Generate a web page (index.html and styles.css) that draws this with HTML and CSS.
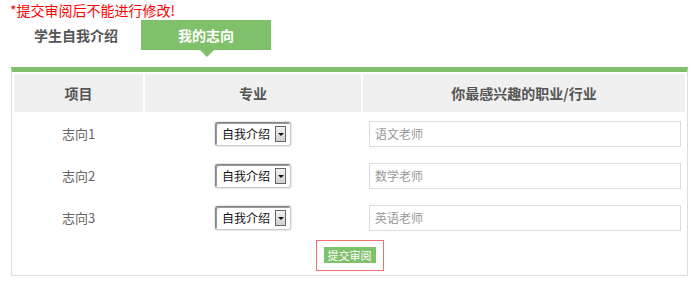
FILE: index.html
```html
<!DOCTYPE html>
<html lang="zh-CN">
<head>
    <meta charset="UTF-8">
    <meta name="viewport" content="width=device-width, initial-scale=1.0">
    <title>我的志向</title>
    <link rel="stylesheet" href="styles.css">
</head>
<body>
    <div id="page">
        <p class="notice">*提交审阅后不能进行修改!</p>
        <ul class="tabs">
            <li class="tab">学生自我介绍</li>
            <li class="tab active">我的志向</li>
        </ul>
        <div class="panel">
            <table class="goals">
                <thead>
                    <tr>
                        <th class="col-item">项目</th>
                        <th class="col-major">专业</th>
                        <th>你最感兴趣的职业/行业</th>
                    </tr>
                </thead>
                <tbody>
                    <tr>
                        <td>志向1</td>
                        <td>
                            <span class="picker">
                                <select class="picker-select"><option>自我介绍</option></select>
                                <span class="picker-arrow"></span>
                            </span>
                        </td>
                        <td class="cell-job"><input type="text" placeholder="语文老师"></td>
                    </tr>
                    <tr>
                        <td>志向2</td>
                        <td>
                            <span class="picker">
                                <select class="picker-select"><option>自我介绍</option></select>
                                <span class="picker-arrow"></span>
                            </span>
                        </td>
                        <td class="cell-job"><input type="text" placeholder="数学老师"></td>
                    </tr>
                    <tr>
                        <td>志向3</td>
                        <td>
                            <span class="picker">
                                <select class="picker-select"><option>自我介绍</option></select>
                                <span class="picker-arrow"></span>
                            </span>
                        </td>
                        <td class="cell-job"><input type="text" placeholder="英语老师"></td>
                    </tr>
                </tbody>
            </table>
            <div class="actions">
                <span class="submit-wrap"><button class="submit">提交审阅</button></span>
            </div>
        </div>
    </div>
</body>
</html>
```

FILE: styles.css
```css
body {
    margin: 0;
    background: #fff;
    font-family: "Noto Sans CJK SC", "Noto Sans", sans-serif;
    color: #555;
}
#page {
    width: 693px;
}
.notice {
    margin: 0;
    padding: 1px 0 0 10px;
    height: 19px;
    font-size: 14px;
    line-height: 18px;
    color: #f00;
}
.tabs {
    display: flex;
    margin: 0 0 17px 11px;
    padding: 0;
    list-style: none;
    height: 30px;
}
.tab {
    position: relative;
    width: 130px;
    height: 30px;
    line-height: 30px;
    text-align: center;
    font-size: 14px;
    font-weight: bold;
    color: #555;
}
.tab.active {
    background: #7fc06a;
    color: #fff;
}
.tab.active::after {
    content: "";
    position: absolute;
    left: 50%;
    top: 100%;
    margin-left: -6px;
    border-left: 7px solid transparent;
    border-right: 7px solid transparent;
    border-top: 7px solid #7fc06a;
}
.panel {
    box-sizing: border-box;
    width: 677px;
    margin-left: 11px;
    border: 1px solid #ddd;
    border-top: 5px solid #7fc06a;
    padding-bottom: 4px;
}
.goals {
    width: 100%;
    border-collapse: separate;
    border-spacing: 2px;
}
.goals th {
    height: 38px;
    padding: 0;
    background: #f0f0f0;
    font-size: 14px;
    font-weight: bold;
    line-height: 20px;
    color: #555;
}
.goals .col-item {
    width: 129px;
}
.goals .col-major {
    width: 216px;
}
.goals td {
    height: 40px;
    padding: 0;
    text-align: center;
    font-size: 13px;
    line-height: 20px;
    color: #666;
}
.goals td.cell-job {
    text-align: left;
    padding-left: 6px;
}
.cell-job input {
    box-sizing: border-box;
    display: block;
    width: 312px;
    height: 26px;
    margin-top: -1px;
    padding: 0 5px;
    border: 1px solid #ddd;
    font-family: inherit;
    font-size: 12px;
    color: #555;
    outline: none;
}
.cell-job input::placeholder {
    color: #999;
}
.picker {
    box-sizing: border-box;
    display: inline-flex;
    align-items: center;
    vertical-align: middle;
    width: 76px;
    height: 24px;
    padding: 0 4px 0 6px;
    border: 1px solid #888;
    border-right-color: #ccc;
    border-bottom-color: #ccc;
    border-radius: 3px;
    box-shadow: inset 1px 1px 0 #999, 0 0 0 1px #e8e8e8;
    background: #fff;
}
.picker-select {
    -webkit-appearance: none;
    appearance: none;
    flex: 1;
    min-width: 0;
    margin: 0;
    padding: 0;
    border: none;
    background: transparent;
    font-family: inherit;
    font-size: 12px;
    line-height: 16px;
    color: #111;
    outline: none;
}
.picker-arrow {
    box-sizing: border-box;
    display: flex;
    align-items: center;
    justify-content: center;
    width: 11px;
    height: 16px;
    border: 1px solid #666;
    background: linear-gradient(#f2f2f2, #cfcfcf);
}
.picker-arrow::before {
    content: "";
    border-left: 3px solid transparent;
    border-right: 3px solid transparent;
    border-top: 3px solid #111;
}
.actions {
    margin-top: 0;
    text-align: center;
}
.submit-wrap {
    display: inline-block;
    padding: 6px 7px 7px;
    border: 1px solid #f07070;
    line-height: 0;
}
.submit {
    width: 52px;
    height: 16px;
    padding: 0;
    border: none;
    background: #7fc06a;
    color: #fff;
    font-family: inherit;
    font-size: 11px;
    line-height: 16px;
    cursor: pointer;
}
```
